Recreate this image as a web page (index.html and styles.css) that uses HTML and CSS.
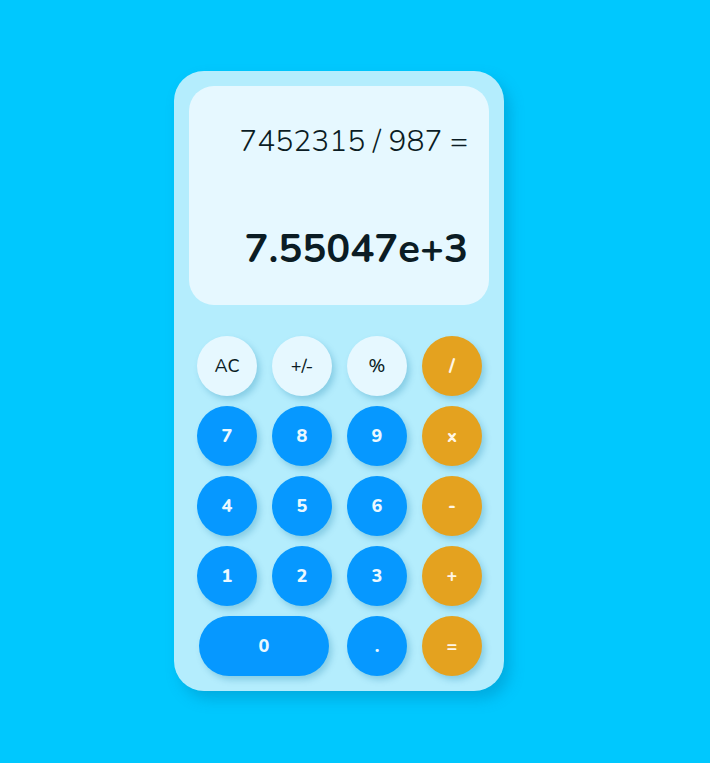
FILE: index.html
```html
<!DOCTYPE html>
<html>
<head>
<meta charset="utf-8">
<link rel="stylesheet" href="styles.css">
</head>
<body>
<div class="page">
  <div class="calc">
    <div class="display">
      <div class="expr">7452315 / 987 =</div>
      <div class="result">7.55047e+3</div>
    </div>
    <div class="keys">
      <button class="key light">AC</button>
      <button class="key light">+/-</button>
      <button class="key light">%</button>
      <button class="key orange">/</button>
      <button class="key blue">7</button>
      <button class="key blue">8</button>
      <button class="key blue">9</button>
      <button class="key orange">x</button>
      <button class="key blue">4</button>
      <button class="key blue">5</button>
      <button class="key blue">6</button>
      <button class="key orange">-</button>
      <button class="key blue">1</button>
      <button class="key blue">2</button>
      <button class="key blue">3</button>
      <button class="key orange">+</button>
      <button class="key blue zero">0</button>
      <button class="key blue">.</button>
      <button class="key orange">=</button>
    </div>
  </div>
</div>
</body>
</html>
```
FILE: styles.css
```css
html, body {
  margin: 0;
  padding: 0;
}
body {
  background: #00c8fe;
  font-family: "Nunito", "Lato", "Noto Sans", sans-serif;
  width: 710px;
  height: 763px;
}
.page {
  display: flex;
  justify-content: flex-start;
  padding: 71px 0 0 174px;
}
.calc {
  width: 300px;
  height: 590px;
  padding: 15px;
  background: #b4edfd;
  border-radius: 30px;
  box-shadow: 6px 8px 14px rgba(0, 120, 170, 0.35);
  display: flex;
  flex-direction: column;
}
.display {
  height: 219px;
  background: #e6f8ff;
  border-radius: 25px;
  box-sizing: border-box;
  padding: 36px 21px 0 20px;
  display: flex;
  flex-direction: column;
  align-items: flex-end;
  color: #0b1c24;
}
.expr {
  font-size: 30px;
  font-weight: 300;
  line-height: 40px;
}
.result {
  margin-top: 62px;
  font-size: 40px;
  font-weight: 700;
  line-height: 50px;
}
.keys {
  margin-top: 31px;
  padding: 0 7px 0 8px;
  display: grid;
  grid-template-columns: repeat(4, 60px);
  grid-auto-rows: 60px;
  column-gap: 15px;
  row-gap: 10px;
}
.key {
  border: none;
  border-radius: 30px;
  width: 60px;
  height: 60px;
  padding: 0;
  font-family: inherit;
  font-size: 18px;
  font-weight: 800;
  box-shadow: 3px 4px 6px rgba(0, 110, 160, 0.25);
  display: flex;
  align-items: center;
  justify-content: center;
}
.light {
  background: #e6f8ff;
  color: #0b1c24;
  font-weight: 500;
}
.blue {
  background: #0698ff;
  color: #eaf8ff;
}
.orange {
  background: #e4a21f;
  color: #fff6e6;
}
.zero {
  grid-column: span 2;
  width: 130px;
  margin-left: 2px;
}
```
